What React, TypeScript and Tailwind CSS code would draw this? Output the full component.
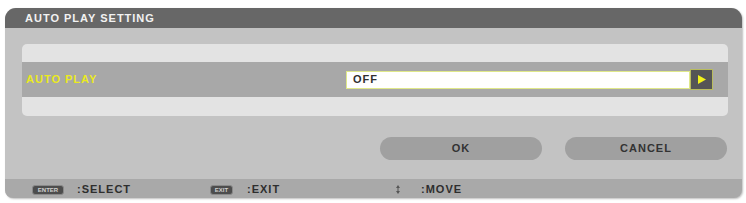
import React from "react";

const F = { fontFamily: '"Liberation Sans", Arial, sans-serif' };

export default function App() {
  return (
    <div className="w-[746px] h-[203px] bg-white pt-[8px] pl-[5px]" style={F}>
      <div className="w-[737px] flex flex-col rounded-t-[11px] rounded-b-[8px] bg-[#c3c3c3] shadow-[1px_1px_2px_rgba(0,0,0,0.25)]">
        {/* Header */}
        <div className="h-[20px] rounded-t-[11px] bg-[#676767] pl-[20px] flex items-center">
          <span className="text-[11px] font-bold tracking-[1px] text-[#f2f2f2] leading-none">AUTO PLAY SETTING</span>
        </div>
        {/* Body */}
        <div className="pt-[16px] pl-[17px] pr-[14px]">
          <div className="flex flex-col">
            <div className="h-[18px] rounded-t-[5px] bg-[#e3e3e3]" />
            <div className="h-[35px] bg-[#a8a8a8] flex items-center pl-[4px] pr-[15px]">
              <span className="w-[320px] text-[11px] font-bold tracking-[1px] text-[#eaea1e] leading-none">AUTO PLAY</span>
              <div className="flex items-center h-[20px]">
                <div className="w-[344px] h-[18px] bg-white border border-[#dfe88a] flex items-center pl-[6px]">
                  <span className="text-[11px] font-bold tracking-[1px] text-[#303030] leading-none">OFF</span>
                </div>
                <div className="w-[23px] h-[21px] bg-[#555555] border border-[#b9bc5e] flex items-center justify-center">
                  <svg width="8" height="9" viewBox="0 0 8 9">
                    <polygon points="0,0 8,4.5 0,9" fill="#f2f21a" />
                  </svg>
                </div>
              </div>
            </div>
            <div className="h-[19px] rounded-b-[5px] bg-[#e3e3e3]" />
          </div>
          {/* Buttons */}
          <div className="flex justify-end gap-[23px] pt-[21px] pr-[1px]">
            <div className="w-[162px] h-[23px] rounded-full bg-[#a0a0a0] flex items-center justify-center">
              <span className="text-[11px] font-bold tracking-[1px] text-[#333] leading-none">OK</span>
            </div>
            <div className="w-[162px] h-[23px] rounded-full bg-[#a0a0a0] flex items-center justify-center">
              <span className="text-[11px] font-bold tracking-[1px] text-[#333] leading-none">CANCEL</span>
            </div>
          </div>
        </div>
        {/* Footer */}
        <div className="mt-[19px] h-[19px] rounded-b-[8px] bg-[#a9a9a9] flex items-center pl-[27px] pt-[2px]">
          <div className="w-[178px] flex items-center">
            <div className="w-[32px] h-[10px] rounded-[3px] bg-[#4d4d4d] border border-[#8a8a8a] flex items-center justify-center">
              <span className="text-[6px] font-bold text-[#d0d0d0] leading-none">ENTER</span>
            </div>
            <span className="ml-[13px] text-[11px] font-bold tracking-[1px] text-[#2e2e2e] leading-none">:SELECT</span>
          </div>
          <div className="w-[186px] flex items-center">
            <div className="w-[23px] h-[10px] rounded-[3px] bg-[#4d4d4d] border border-[#8a8a8a] flex items-center justify-center">
              <span className="text-[6px] font-bold text-[#d0d0d0] leading-none">EXIT</span>
            </div>
            <span className="ml-[14px] text-[11px] font-bold tracking-[1px] text-[#2e2e2e] leading-none">:EXIT</span>
          </div>
          <div className="flex items-center">
            <svg width="4" height="9" viewBox="0 0 4 9">
              <polygon points="2,0 4,3 0,3" fill="#555" />
              <rect x="1.5" y="3" width="1" height="3" fill="#555" />
              <polygon points="0,6 4,6 2,9" fill="#555" />
            </svg>
            <span className="ml-[21px] text-[11px] font-bold tracking-[1px] text-[#2e2e2e] leading-none">:MOVE</span>
          </div>
        </div>
      </div>
    </div>
  );
}
